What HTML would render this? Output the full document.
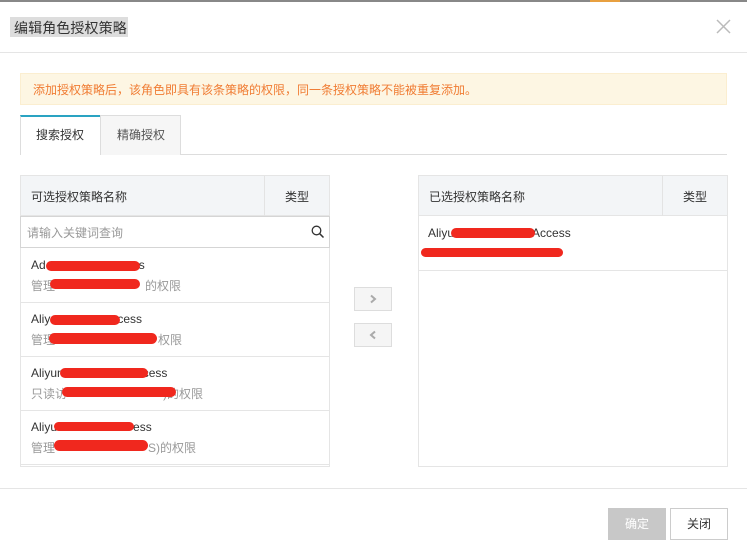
<!DOCTYPE html>
<html><head><meta charset="utf-8"><style>
*{box-sizing:border-box;margin:0;padding:0}
body{width:747px;height:559px;background:#fff;position:relative;overflow:hidden;font-family:"Liberation Sans","Noto Sans CJK SC",sans-serif;color:#333}
.a{position:absolute}
.red{position:absolute;background:#f0281e;border-radius:6px}
.t{font-size:12px;color:#333}
.s{font-size:12px;color:#999}
</style></head><body>
<div class="a" style="left:0;top:0;width:747px;height:2px;background:#888"></div>
<div class="a" style="left:590px;top:0;width:30px;height:2px;background:#e8a040"></div>
<div class="a" style="left:10px;top:17px;width:118px;height:20px;background:#ddd"></div>
<div class="a" style="left:14px;top:18px;font-size:14px;color:#333;letter-spacing:0.1px">编辑角色授权策略</div>
<svg class="a" style="left:716px;top:19px" width="15" height="15"><path d="M1 1L14 14M14 1L1 14" stroke="#bbb" stroke-width="1.5"/></svg>
<div class="a" style="left:0;top:52px;width:747px;height:1px;background:#e5e5e5"></div>
<div class="a" style="left:20px;top:73px;width:707px;height:32px;background:#fdf6e3;border:1px solid #fbeed0"></div>
<div class="a" style="left:33px;top:81px;font-size:12px;color:#f07c33">添加授权策略后，该角色即具有该条策略的权限，同一条授权策略不能被重复添加。</div>
<div class="a" style="left:20px;top:154px;width:707px;height:1px;background:#ddd"></div>
<div class="a" style="left:20px;top:115px;width:81px;height:40px;background:#fff;border-left:1px solid #ddd;border-top:2px solid #2aa3c2"></div>
<div class="a" style="left:36px;top:126px;font-size:12px;color:#333">搜索授权</div>
<div class="a" style="left:100px;top:115px;width:81px;height:40px;background:#f6f6f6;border:1px solid #ddd;border-bottom:none"></div>
<div class="a" style="left:117px;top:126px;font-size:12px;color:#555">精确授权</div>
<!-- left panel -->
<div class="a" style="left:20px;top:175px;width:310px;height:292px;border:1px solid #e5e5e5"></div>
<div class="a" style="left:21px;top:176px;width:308px;height:40px;background:#f3f5f7;border-bottom:1px solid #e5e5e5"></div>
<div class="a" style="left:264px;top:176px;width:1px;height:40px;background:#e3e3e3"></div>
<div class="a t" style="left:31px;top:188px">可选授权策略名称</div>
<div class="a t" style="left:285px;top:188px">类型</div>
<div class="a" style="left:20px;top:216px;width:310px;height:32px;border:1px solid #d5d5d5;background:#fff"></div>
<div class="a s" style="left:27px;top:224px">请输入关键词查询</div>
<svg class="a" style="left:311px;top:225px" width="14" height="14"><circle cx="5.5" cy="5.5" r="4.3" fill="none" stroke="#333" stroke-width="1.3"/><path d="M8.7 8.7L12.5 12.5" stroke="#333" stroke-width="1.5"/></svg>
<div class="a" style="left:21px;top:302px;width:308px;height:1px;background:#e5e5e5"></div>
<div class="a" style="left:21px;top:356px;width:308px;height:1px;background:#e5e5e5"></div>
<div class="a" style="left:21px;top:410px;width:308px;height:1px;background:#e5e5e5"></div>
<div class="a" style="left:21px;top:464px;width:308px;height:1px;background:#e5e5e5"></div>
<div class="a t" style="left:31px;top:258px">Ad<span style="margin-left:93px">s</span></div>
<div class="a s" style="left:31px;top:277px">管理<span style="margin-left:90px">的权限</span></div>
<div class="red" style="left:46px;top:261px;width:94px;height:10px"></div>
<div class="red" style="left:50px;top:279px;width:90px;height:10px"></div>
<div class="a t" style="left:31px;top:312px">Aliy<span style="margin-left:67px">cess</span></div>
<div class="a s" style="left:31px;top:331px">管理<span style="margin-left:103px">权限</span></div>
<div class="red" style="left:50px;top:315px;width:70px;height:10px"></div>
<div class="red" style="left:49px;top:333px;width:108px;height:11px"></div>
<div class="a t" style="left:31px;top:366px">Aliyun<span style="margin-left:73px">ccess</span></div>
<div class="a s" style="left:31px;top:385px">只读访<span style="margin-left:96px">)的权限</span></div>
<div class="red" style="left:60px;top:368px;width:88px;height:10px"></div>
<div class="red" style="left:62px;top:387px;width:114px;height:10px"></div>
<div class="a t" style="left:31px;top:420px">Aliyu<span style="margin-left:76px">ess</span></div>
<div class="a s" style="left:31px;top:439px">管理<span style="margin-left:93px">S)的权限</span></div>
<div class="red" style="left:54px;top:422px;width:80px;height:9px"></div>
<div class="red" style="left:54px;top:440px;width:94px;height:11px"></div>
<!-- arrows -->
<div class="a" style="left:354px;top:287px;width:38px;height:24px;background:#f5f5f5;border:1px solid #ddd"></div>
<svg class="a" style="left:368px;top:294px" width="10" height="10"><path d="M3 1.5L7 5L3 8.5" fill="none" stroke="#aaa" stroke-width="2"/></svg>
<div class="a" style="left:354px;top:323px;width:38px;height:24px;background:#f5f5f5;border:1px solid #ddd"></div>
<svg class="a" style="left:368px;top:330px" width="10" height="10"><path d="M7 1.5L3 5L7 8.5" fill="none" stroke="#aaa" stroke-width="2"/></svg>
<!-- right panel -->
<div class="a" style="left:418px;top:175px;width:310px;height:292px;border:1px solid #e5e5e5"></div>
<div class="a" style="left:419px;top:176px;width:308px;height:40px;background:#f3f5f7;border-bottom:1px solid #e5e5e5"></div>
<div class="a" style="left:662px;top:176px;width:1px;height:40px;background:#e3e3e3"></div>
<div class="a t" style="left:429px;top:188px">已选授权策略名称</div>
<div class="a t" style="left:683px;top:188px">类型</div>
<div class="a" style="left:419px;top:270px;width:308px;height:1px;background:#e5e5e5"></div>
<div class="a t" style="left:428px;top:226px">Aliyu<span style="margin-left:78px">Access</span></div>
<div class="red" style="left:451px;top:228px;width:84px;height:10px"></div>
<div class="red" style="left:421px;top:248px;width:142px;height:9px"></div>
<!-- footer -->
<div class="a" style="left:0;top:488px;width:747px;height:1px;background:#e5e5e5"></div>
<div class="a" style="left:608px;top:508px;width:58px;height:32px;background:#c8c8c8;color:#fff;font-size:12px;text-align:center;line-height:32px">确定</div>
<div class="a" style="left:670px;top:508px;width:58px;height:32px;background:#fff;border:1px solid #ccc;color:#333;font-size:12px;text-align:center;line-height:30px">关闭</div>
</body></html>
